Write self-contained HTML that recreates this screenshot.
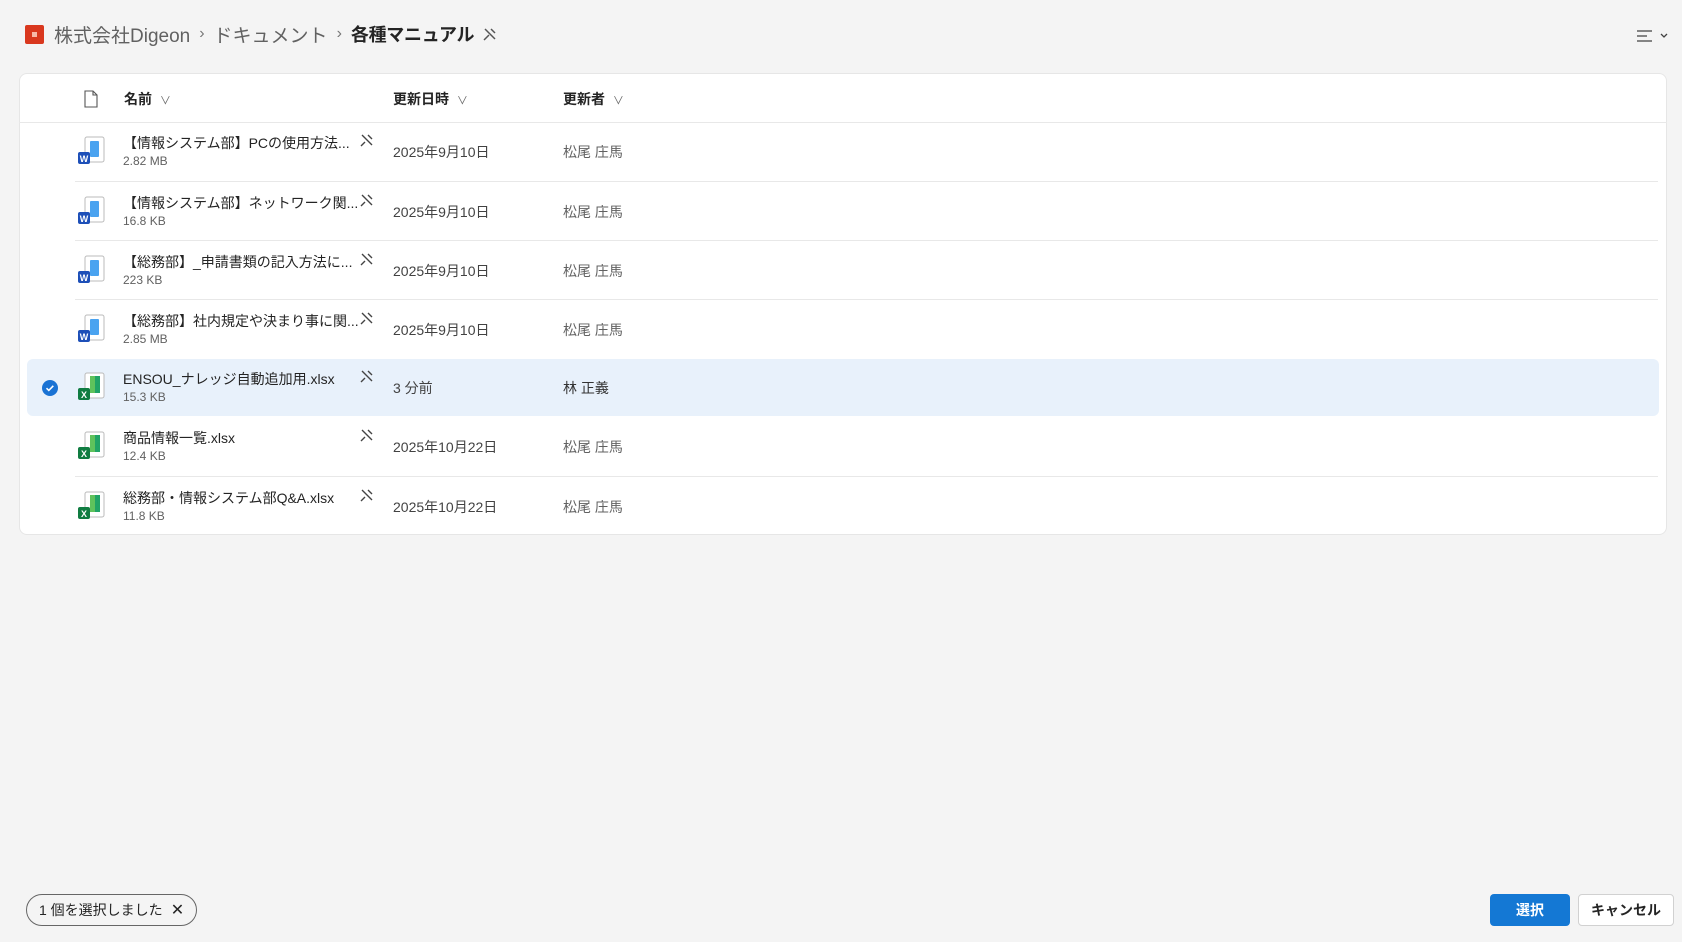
<!DOCTYPE html>
<html><head><meta charset="utf-8"><style>
*{box-sizing:border-box;margin:0;padding:0}
body{width:1682px;height:942px;background:#f4f4f4;font-family:"Liberation Sans","Noto Sans CJK JP",sans-serif;color:#242424;position:relative;overflow:hidden}
.abs{position:absolute}
.bc{top:22px;left:25px;height:24px;display:flex;align-items:center;font-size:19px;color:#616161;white-space:nowrap}
.logo{width:19px;height:19px;background:#d9381e;border-radius:2px;margin-right:10px;position:relative}
.logo:after{content:"";position:absolute;left:7px;top:7px;width:5px;height:5px;background:#f7b9a8}
.sep{margin:0 9px;font-size:16px;color:#777}
.card{left:19px;top:73px;width:1648px;height:462px;background:#fff;border-radius:8px;border:1px solid #e6e6e6}
.hdr{font-size:14px;font-weight:bold;color:#242424}
.row{position:absolute;left:75px;width:1583px;height:59px;border-top:1px solid #e8e8e8}
.nm{position:absolute;left:48px;top:11px;font-size:14px;color:#242424;white-space:nowrap}
.sz{position:absolute;left:48px;top:32px;font-size:12px;color:#616161}
.dt{position:absolute;left:318px;top:20px;font-size:14px;color:#424242}
.au{position:absolute;left:488px;top:20px;font-size:14px;color:#616161}
.pin{position:absolute;left:285px;top:11px}
.fi{position:absolute;left:2px;top:14px}
.btn{top:894px;height:32px;border-radius:4px;font-size:14px;font-weight:bold;display:flex;align-items:center;justify-content:center}
</style></head><body>
<div class="abs bc"><div class="logo"></div>株式会社Digeon<span class="sep">›</span>ドキュメント<span class="sep">›</span><b style="color:#242424;font-size:18px;letter-spacing:-0.3px">各種マニュアル</b>
<svg width="16" height="16" viewBox="0 0 16 16" style="margin-left:8px" fill="none" stroke="#555" stroke-width="1.5"><path d="M2 14 L7 9 M5 5 L11 11 M9 3 L13 7 M3 3 L13 13"/></svg></div>
<svg class="abs" style="left:1636px;top:29px" width="34" height="14" viewBox="0 0 34 14" fill="none" stroke="#424242" stroke-width="1.3"><path d="M1 2h15M1 7h10M1 12h15M25 5l3 3 3-3"/></svg>
<div class="abs card">
 <svg class="abs" style="left:64px;top:16px" width="14" height="18" viewBox="0 0 14 18" fill="none" stroke="#555" stroke-width="1.1"><path d="M1 1h8l4 4v12H1z M9 1v4h4"/></svg>
 <div class="abs hdr" style="left:104px;top:15px">名前 <span style="font-weight:normal;color:#666;font-size:11px;margin-left:4px">∨</span></div>
 <div class="abs hdr" style="left:373px;top:15px">更新日時 <span style="font-weight:normal;color:#666;font-size:11px;margin-left:4px">∨</span></div>
 <div class="abs hdr" style="left:543px;top:15px">更新者 <span style="font-weight:normal;color:#666;font-size:11px;margin-left:4px">∨</span></div>
</div>
<div class="abs" style="left:19px;top:122px;width:1648px;border-top:1px solid #e8e8e8"></div>
<div class="abs" style="left:27px;top:359px;width:1632px;height:57px;background:#e8f1fb;border-radius:6px"></div>
<svg class="abs" style="left:42px;top:380px" width="16" height="16" viewBox="0 0 16 16"><circle cx="8" cy="8" r="8" fill="#1a73d4"/><path d="M4.5 8.2l2.3 2.2 4.5-4.6" stroke="#fff" stroke-width="1.6" fill="none"/></svg>

<div class="row" style="top:122px;border-top:none">
 <svg class="fi" width="30" height="30" viewBox="0 0 30 30"><rect x="8" y="1" width="19" height="25" rx="2" fill="#fff" stroke="#bbb"/><rect x="13" y="5" width="9" height="16" rx="1" fill="#4aa3f0"/><rect x="1" y="16" width="12" height="12" rx="2" fill="#1d4fb8"/><text x="7" y="26" font-size="9" font-weight="bold" fill="#fff" text-anchor="middle" font-family="Liberation Sans">W</text></svg>
 <div class="nm">【情報システム部】PCの使用方法...</div><div class="sz">2.82 MB</div>
 <svg class="pin" width="14" height="14" viewBox="0 0 14 14" fill="none" stroke="#444" stroke-width="1.4"><path d="M1 13l4-4M4 4l6 6M8 2l4 4M2 2l10 10"/></svg>
 <div class="dt">2025年9月10日</div><div class="au">松尾 庄馬</div></div>
<div class="row" style="top:181px">
 <svg class="fi" width="30" height="30" viewBox="0 0 30 30"><rect x="8" y="1" width="19" height="25" rx="2" fill="#fff" stroke="#bbb"/><rect x="13" y="5" width="9" height="16" rx="1" fill="#4aa3f0"/><rect x="1" y="16" width="12" height="12" rx="2" fill="#1d4fb8"/><text x="7" y="26" font-size="9" font-weight="bold" fill="#fff" text-anchor="middle" font-family="Liberation Sans">W</text></svg>
 <div class="nm">【情報システム部】ネットワーク関...</div><div class="sz">16.8 KB</div>
 <svg class="pin" width="14" height="14" viewBox="0 0 14 14" fill="none" stroke="#444" stroke-width="1.4"><path d="M1 13l4-4M4 4l6 6M8 2l4 4M2 2l10 10"/></svg>
 <div class="dt">2025年9月10日</div><div class="au">松尾 庄馬</div></div>
<div class="row" style="top:240px">
 <svg class="fi" width="30" height="30" viewBox="0 0 30 30"><rect x="8" y="1" width="19" height="25" rx="2" fill="#fff" stroke="#bbb"/><rect x="13" y="5" width="9" height="16" rx="1" fill="#4aa3f0"/><rect x="1" y="16" width="12" height="12" rx="2" fill="#1d4fb8"/><text x="7" y="26" font-size="9" font-weight="bold" fill="#fff" text-anchor="middle" font-family="Liberation Sans">W</text></svg>
 <div class="nm">【総務部】_申請書類の記入方法に...</div><div class="sz">223 KB</div>
 <svg class="pin" width="14" height="14" viewBox="0 0 14 14" fill="none" stroke="#444" stroke-width="1.4"><path d="M1 13l4-4M4 4l6 6M8 2l4 4M2 2l10 10"/></svg>
 <div class="dt">2025年9月10日</div><div class="au">松尾 庄馬</div></div>
<div class="row" style="top:299px">
 <svg class="fi" width="30" height="30" viewBox="0 0 30 30"><rect x="8" y="1" width="19" height="25" rx="2" fill="#fff" stroke="#bbb"/><rect x="13" y="5" width="9" height="16" rx="1" fill="#4aa3f0"/><rect x="1" y="16" width="12" height="12" rx="2" fill="#1d4fb8"/><text x="7" y="26" font-size="9" font-weight="bold" fill="#fff" text-anchor="middle" font-family="Liberation Sans">W</text></svg>
 <div class="nm">【総務部】社内規定や決まり事に関...</div><div class="sz">2.85 MB</div>
 <svg class="pin" width="14" height="14" viewBox="0 0 14 14" fill="none" stroke="#444" stroke-width="1.4"><path d="M1 13l4-4M4 4l6 6M8 2l4 4M2 2l10 10"/></svg>
 <div class="dt">2025年9月10日</div><div class="au">松尾 庄馬</div></div>
<div class="row" style="top:358px;border-top:none">
 <svg class="fi" width="30" height="30" viewBox="0 0 30 30"><rect x="8" y="1" width="19" height="25" rx="2" fill="#fff" stroke="#bbb"/><rect x="13" y="4" width="5" height="17" fill="#5fc25c"/><rect x="18" y="4" width="5" height="17" fill="#21a366"/><rect x="1" y="16" width="12" height="12" rx="2" fill="#107c41"/><text x="7" y="26" font-size="9" font-weight="bold" fill="#fff" text-anchor="middle" font-family="Liberation Sans">X</text></svg>
 <div class="nm">ENSOU_ナレッジ自動追加用.xlsx</div><div class="sz">15.3 KB</div>
 <svg class="pin" width="14" height="14" viewBox="0 0 14 14" fill="none" stroke="#444" stroke-width="1.4"><path d="M1 13l4-4M4 4l6 6M8 2l4 4M2 2l10 10"/></svg>
 <div class="dt">3 分前</div><div class="au" style="color:#333">林 正義</div></div>
<div class="row" style="top:417px;border-top:none">
 <svg class="fi" width="30" height="30" viewBox="0 0 30 30"><rect x="8" y="1" width="19" height="25" rx="2" fill="#fff" stroke="#bbb"/><rect x="13" y="4" width="5" height="17" fill="#5fc25c"/><rect x="18" y="4" width="5" height="17" fill="#21a366"/><rect x="1" y="16" width="12" height="12" rx="2" fill="#107c41"/><text x="7" y="26" font-size="9" font-weight="bold" fill="#fff" text-anchor="middle" font-family="Liberation Sans">X</text></svg>
 <div class="nm">商品情報一覧.xlsx</div><div class="sz">12.4 KB</div>
 <svg class="pin" width="14" height="14" viewBox="0 0 14 14" fill="none" stroke="#444" stroke-width="1.4"><path d="M1 13l4-4M4 4l6 6M8 2l4 4M2 2l10 10"/></svg>
 <div class="dt">2025年10月22日</div><div class="au">松尾 庄馬</div></div>
<div class="row" style="top:476px">
 <svg class="fi" width="30" height="30" viewBox="0 0 30 30"><rect x="8" y="1" width="19" height="25" rx="2" fill="#fff" stroke="#bbb"/><rect x="13" y="4" width="5" height="17" fill="#5fc25c"/><rect x="18" y="4" width="5" height="17" fill="#21a366"/><rect x="1" y="16" width="12" height="12" rx="2" fill="#107c41"/><text x="7" y="26" font-size="9" font-weight="bold" fill="#fff" text-anchor="middle" font-family="Liberation Sans">X</text></svg>
 <div class="nm">総務部・情報システム部Q&amp;A.xlsx</div><div class="sz">11.8 KB</div>
 <svg class="pin" width="14" height="14" viewBox="0 0 14 14" fill="none" stroke="#444" stroke-width="1.4"><path d="M1 13l4-4M4 4l6 6M8 2l4 4M2 2l10 10"/></svg>
 <div class="dt">2025年10月22日</div><div class="au">松尾 庄馬</div></div>

<div class="abs" style="left:26px;top:894px;width:171px;height:32px;border:1px solid #666;border-radius:16px;font-size:14px;display:flex;align-items:center;padding-left:12px;color:#242424;white-space:nowrap">1 個を選択しました<span style="margin-left:8px;font-size:16px">✕</span></div>
<div class="abs btn" style="left:1490px;width:80px;background:#1478d4;color:#fff">選択</div>
<div class="abs btn" style="left:1578px;width:96px;background:#fff;border:1px solid #d1d1d1;color:#242424">キャンセル</div>
</body></html>
